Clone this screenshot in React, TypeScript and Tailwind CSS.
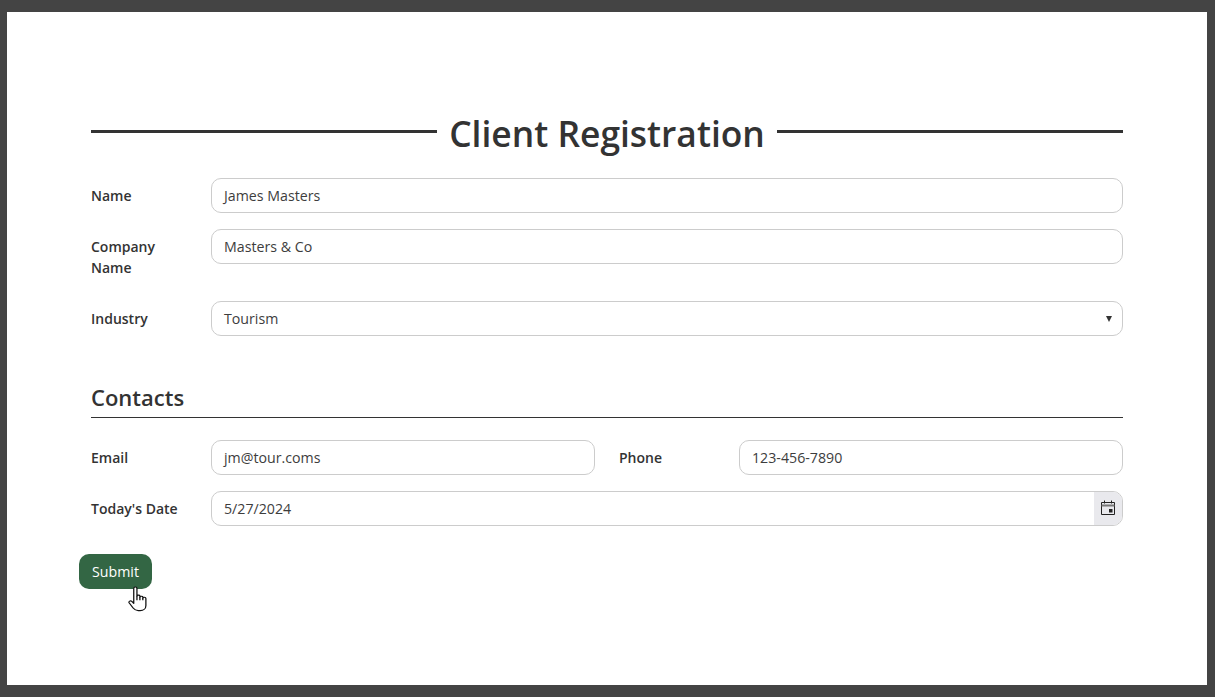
const font = 'font-["Open_Sans","Noto_Sans",sans-serif]'

function Field({ value, arrow, date }: { value: string; arrow?: boolean; date?: boolean }) {
  return (
    <div className="relative flex h-[35px] min-w-0 flex-1 items-center overflow-hidden rounded-[10px] border border-[#cccccc] bg-white pl-3 text-[14.2px] text-[#3d3d3d]">
      <span>{value}</span>
      {arrow && <span className="absolute right-[10px] top-[14px] h-0 w-0 border-x-[3.5px] border-t-[6px] border-x-transparent border-t-[#333333]" />}
      {date && (
        <span className="absolute right-0 top-0 flex h-full w-[28px] items-center justify-center bg-[#e9e9ed]">
          <svg className="-translate-y-px" width="14" height="15" viewBox="0 0 14 15" fill="none">
            <path d="M.5 2.5h13v12H.5z" stroke="#222" />
            <path d="M.5 5.5h13" stroke="#777" strokeWidth="2" />
            <path d="M3.5 .5v3M10.5 .5v3" stroke="#222" />
            <rect x="8" y="9" width="3.5" height="3.5" fill="#222" />
          </svg>
        </span>
      )}
    </div>
  )
}

function Label({ children }: { children: React.ReactNode }) {
  return <div className="w-[120px] shrink-0 pr-4 text-[14px] font-semibold leading-[21px] text-[#333333]">{children}</div>
}

export default function App() {
  return (
    <div className={`h-[697px] border-b-[12px] border-l-[7px] border-r-[8px] border-t-[12px] border-[#444444] bg-white ${font}`}>
      <div className="px-[84px] pt-[98px]">
        <div className="flex h-[46px] items-center gap-3">
          <div className="mb-[4px] h-[3px] flex-1 bg-[#333333]" />
          <h1 className="text-[35.4px] font-semibold leading-[46px] text-[#333333]">Client Registration</h1>
          <div className="mb-[4px] h-[3px] flex-1 bg-[#333333]" />
        </div>
        <div className="mt-[22px] flex items-center">
          <Label>Name</Label>
          <Field value="James Masters" />
        </div>
        <div className="mt-4 flex items-start">
          <div className="pt-[7px]">
            <Label>Company Name</Label>
          </div>
          <Field value="Masters & Co" />
        </div>
        <div className="mt-[23px] flex items-center">
          <Label>Industry</Label>
          <Field value="Tourism" arrow />
        </div>
        <h2 className="mt-[47px] border-b border-[#333333] pb-[6px] text-[22px] font-semibold leading-[28px] text-[#333333]">Contacts</h2>
        <div className="mt-[22px] flex items-center">
          <Label>Email</Label>
          <Field value="jm@tour.coms" />
          <div className="w-6 shrink-0" />
          <Label>Phone</Label>
          <Field value="123-456-7890" />
        </div>
        <div className="mt-4 flex items-center">
          <Label>Today's Date</Label>
          <Field value="5/27/2024" date />
        </div>
        <div className="relative mt-[28px] -ml-3">
          <button className="h-[35px] w-[73px] rounded-[10px] bg-[#336644] text-[14.2px] text-white">Submit</button>
          <svg className="absolute left-[49px] top-[32px]" width="23" height="27" viewBox="0 0 18 25" preserveAspectRatio="none" fill="#ffffff" stroke="#111111" strokeWidth="1" strokeLinejoin="round">
            <path d="M4.5 2.2c0-1.6 2.5-1.6 2.5 0v7c0-1 2.3-1 2.3 0v1c0-1 2.3-1 2.3 0v1c0-1 2.4-1 2.4 .3v6.5c0 2.8-1.8 4.8-4.5 4.8H8c-2 0-3-.9-4-2.4l-3-4.6c-.9-1.5 1-2.7 2-1.5l1.5 1.8z" />
            <path d="M7 9.2v4M9.3 10.2v3M11.6 11.2v2" fill="none" />
          </svg>
        </div>
      </div>
    </div>
  )
}
